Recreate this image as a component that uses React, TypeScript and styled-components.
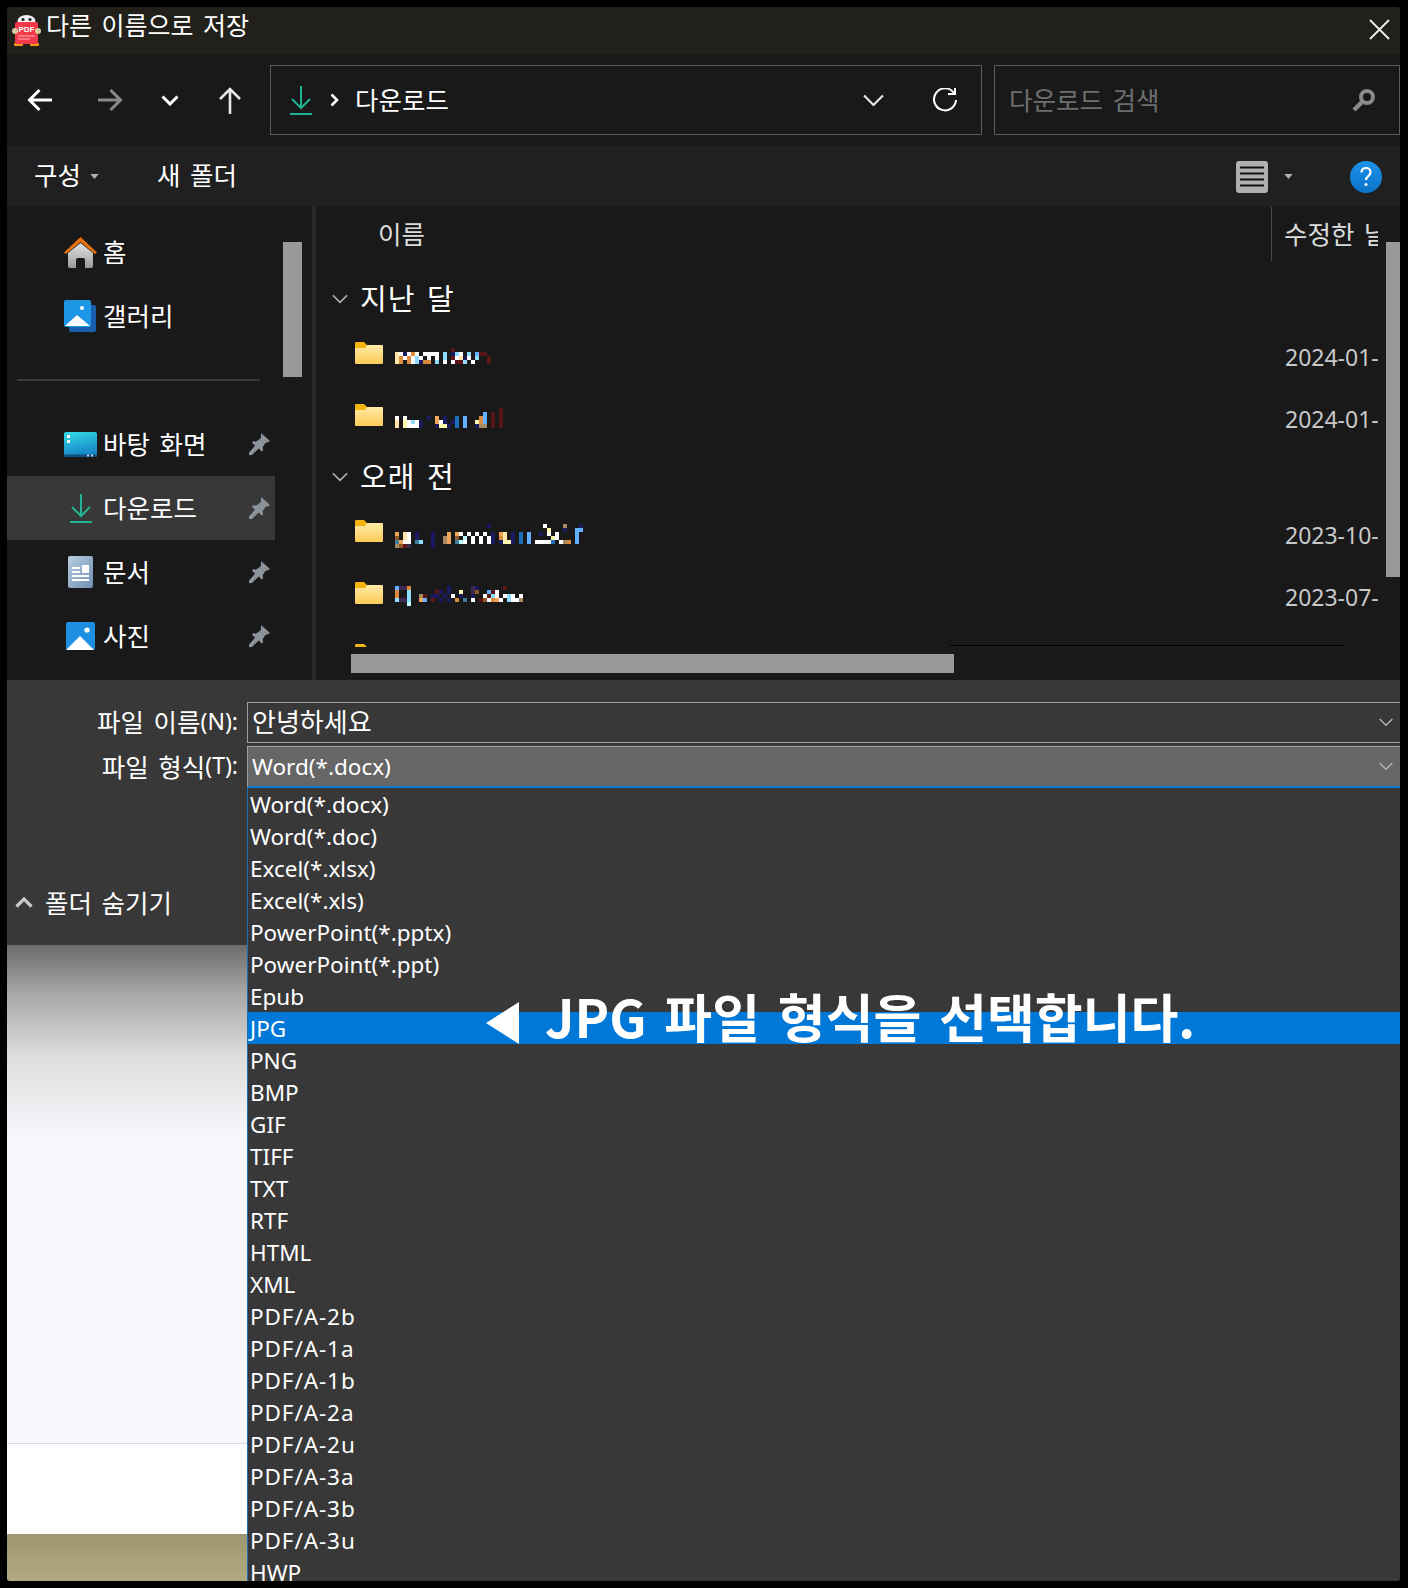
import React from "react";
import styled, { createGlobalStyle } from "styled-components";

const GlobalStyle = createGlobalStyle`
  html, body { margin: 0; padding: 0; background: #000; }
  body {
    font-family: "Noto Sans", "Noto Sans CJK KR", sans-serif;
    color: #fff;
    word-spacing: 3px;
  }
  * { box-sizing: border-box; }
`;

const Page = styled.div`
  width: 1408px;
  height: 1588px;
  padding: 7px 8px 7px 7px;
  background: #000;
`;

const Window = styled.div`
  width: 1393px;
  height: 1574px;
  display: flex;
  flex-direction: column;
  overflow: hidden;
  border-radius: 3px;
  background: #191919;
`;

const TitleBar = styled.div`
  height: 48px;
  flex: none;
  display: flex;
  align-items: center;
  padding: 0 10px 0 5px;
  gap: 5px;
  background: #22201b;
  font-size: 25px;
  line-height: 36px;
`;

const TitleText = styled.span`
  flex: 1;
  margin-top: -12px;
`;

const NavBar = styled.div`
  height: 91px;
  flex: none;
  display: flex;
  padding: 10px 0 0 3px;
  background: #191919;
`;

const NavButton = styled.div<{ $w: number }>`
  width: ${(p) => p.$w}px;
  height: 70px;
  flex: none;
  display: flex;
  align-items: center;
  justify-content: center;
`;

const AddressBox = styled.div`
  width: 712px;
  height: 70px;
  flex: none;
  display: flex;
  align-items: center;
  padding: 0 0 0 18px;
  border: 1.5px solid #5a5a5a;
  font-size: 25.5px;
`;

const Crumb = styled.span`
  flex: 1;
  margin-left: 16px;
  margin-top: -3px;
`;

const AddressChevron = styled.div`
  display: flex;
  margin-right: 24px;
`;

const SearchBox = styled.div`
  width: 406px;
  height: 70px;
  margin-left: 12px;
  flex: none;
  display: flex;
  align-items: center;
  justify-content: space-between;
  padding: 0 23px 0 14px;
  border: 1.5px solid #5a5a5a;
  font-size: 25.5px;
  color: #6f6f6f;
`;

const SearchHint = styled.span`
  margin-top: -4px;
`;

const Toolbar = styled.div`
  height: 61px;
  flex: none;
  display: flex;
  align-items: center;
  padding: 0 18px 0 27px;
  background: #202020;
  font-size: 25.5px;
`;

const ToolLabel = styled.span`
  margin-top: -6px;
`;

const ToolGap = styled.div<{ $w: number }>`
  width: ${(p) => p.$w}px;
  flex: none;
`;

const Spacer = styled.div`
  flex: 1;
`;

const Browser = styled.div`
  height: 473px;
  flex: none;
  display: flex;
  background: #191919;
`;

const Sidebar = styled.div`
  width: 305px;
  flex: none;
  display: flex;
  overflow: hidden;
`;

const SideList = styled.div`
  width: 268px;
  flex: none;
  padding-top: 13px;
`;

const SideItem = styled.div<{ $selected?: boolean }>`
  height: 64px;
  display: flex;
  align-items: center;
  padding: 0 5px 0 57px;
  background: ${(p) => (p.$selected ? "#383838" : "transparent")};
  font-size: 25.5px;
`;

const SideIcon = styled.div`
  width: 33px;
  height: 33px;
  flex: none;
  display: flex;
  align-items: center;
  justify-content: center;
`;

const SideLabel = styled.span`
  flex: 1;
  margin: -4px 0 0 6px;
`;

const SideSeparator = styled.div`
  height: 2px;
  width: 243px;
  margin: 31px 0 31px 10px;
  background: #3a3a3a;
`;

const SideThumb = styled.div`
  width: 19px;
  height: 135px;
  flex: none;
  margin: 35px 0 0 8px;
  background: #999;
`;

const PaneDivider = styled.div`
  width: 4px;
  flex: none;
  background: #2a2a2a;
`;

const FilesPane = styled.div`
  flex: 1;
  min-width: 0;
  display: flex;
`;

const FilesMain = styled.div`
  width: 1062px;
  flex: none;
  display: flex;
  flex-direction: column;
  overflow: hidden;
`;

const ColumnHeader = styled.div`
  height: 54px;
  flex: none;
  display: grid;
  grid-template-columns: 955px 1fr;
  align-items: stretch;
  font-size: 25.5px;
  color: #dcdcdc;
`;

const ColumnName = styled.div`
  display: flex;
  align-items: center;
  padding: 0 0 3px 62px;
`;

const ColumnDate = styled.div`
  display: flex;
  align-items: center;
  padding: 0 0 3px 12px;
  border-left: 1.5px solid #4a4a4a;
  white-space: nowrap;
  overflow: hidden;
`;

const FileList = styled.div`
  height: 386px;
  flex: none;
  padding-top: 12px;
  overflow: hidden;
  position: relative;
`;

const GroupRow = styled.div`
  height: 54px;
  display: flex;
  align-items: flex-start;
  padding: 4px 0 0 16px;
  font-size: 29px;
  line-height: 40px;
`;

const GroupLabel = styled.span`
  margin: 2px 0 0 12px;
  letter-spacing: 1px;
`;

const GroupChevron = styled.div`
  display: flex;
  margin-top: 17px;
`;

const FileRow = styled.div`
  height: 62px;
  display: grid;
  grid-template-columns: 969px 1fr;
  align-items: center;
`;

const FileName = styled.div`
  display: flex;
  align-items: flex-start;
  gap: 12px;
  height: 100%;
  padding: 15px 0 0 39px;
`;

const FileDate = styled.div`
  font-size: 23px;
  color: #c8c8c8;
  white-space: nowrap;
  overflow: hidden;
  margin-top: -2px;
`;

const HScrollTrack = styled.div`
  height: 33px;
  flex: none;
  padding: 7px 0 0 35px;
`;

const HScrollThumb = styled.div`
  width: 603px;
  height: 19px;
  background: #999;
`;

const ClipLine = styled.div`
  position: absolute;
  left: 634px;
  bottom: 1px;
  width: 394px;
  height: 1px;
  background: #000;
`;

const VScroll = styled.div`
  flex: 1;
  padding: 35px 0 0 8px;
`;

const VThumb = styled.div`
  width: 14px;
  height: 335px;
  background: #999;
`;

const Lower = styled.div`
  flex: 1;
  min-height: 0;
  display: flex;
  background: #383838;
`;

const LowerLeft = styled.div`
  width: 240px;
  flex: none;
  display: flex;
  flex-direction: column;
`;

const FormPanel = styled.div`
  height: 265px;
  flex: none;
  padding-top: 20px;
  display: flex;
  flex-direction: column;
  background: #383838;
`;

const FieldLabel = styled.div<{ $h: number }>`
  height: ${(p) => p.$h}px;
  flex: none;
  display: flex;
  align-items: center;
  justify-content: flex-end;
  padding-right: 9px;
  font-size: 25.5px;
`;

const Mnemonic = styled.span`
  font-size: 23px;
  word-spacing: 0;
`;

const HideFolders = styled.div`
  margin-top: auto;
  height: 82px;
  display: flex;
  align-items: flex-start;
  gap: 12px;
  padding: 22px 0 0 8px;
  font-size: 25.5px;
  line-height: 36px;
`;

const HideChevron = styled.div`
  display: flex;
  margin-top: 12px;
`;

const BackdropFade = styled.div`
  height: 499px;
  flex: none;
  border-bottom: 1px solid #d6d6ea;
  background: linear-gradient(
    to bottom,
    #6c6c6c 0,
    #a9a9a9 50px,
    #dcdcdc 110px,
    #f6f7fb 190px,
    #f8f9fd 100%
  );
`;

const BackdropWhite = styled.div`
  height: 90px;
  flex: none;
  background: #fff;
`;

const BackdropSand = styled.div`
  flex: 1;
  background: linear-gradient(to bottom, #9e9672, #b2aa7f);
`;

const LowerRight = styled.div`
  flex: 1;
  min-width: 0;
  padding-top: 22px;
  display: flex;
  flex-direction: column;
`;

const FieldBox = styled.div<{ $active?: boolean }>`
  height: ${(p) => (p.$active ? 42 : 41)}px;
  margin-bottom: ${(p) => (p.$active ? 0 : 3)}px;
  flex: none;
  display: flex;
  align-items: center;
  justify-content: space-between;
  padding: 0 7px 0 4px;
  background: ${(p) => (p.$active ? "#666" : "#383838")};
  border: 1.5px solid #a0a0a0;
  border-right: none;
  border-bottom: ${(p) => (p.$active ? "2px solid #0f78d4" : "1.5px solid #a0a0a0")};
  font-size: ${(p) => (p.$active ? 22.5 : 26)}px;
`;

const FieldValue = styled.span<{ $active?: boolean }>`
  margin-top: ${(p) => (p.$active ? 0 : -4)}px;
`;

const Dropdown = styled.div`
  flex: 1;
  min-height: 0;
  overflow: hidden;
  background: #383838;
  border-left: 1.5px solid #1f6fb0;
`;

const Option = styled.div<{ $selected?: boolean; $spaced?: boolean }>`
  height: 32px;
  position: relative;
  padding-left: 2px;
  line-height: 34px;
  font-size: 22.5px;
  letter-spacing: ${(p) => (p.$spaced ? 0.9 : 0)}px;
  white-space: nowrap;
  background: ${(p) => (p.$selected ? "#0078d7" : "transparent")};
`;

const Callout = styled.div`
  position: absolute;
  left: 238px;
  top: -10px;
  height: 42px;
  display: flex;
  align-items: flex-end;
  gap: 26px;
  font-size: 52px;
  font-weight: 700;
  line-height: 42px;
  letter-spacing: 0;
  word-spacing: 6px;
  color: #fff;
  font-family: "Noto Sans CJK KR", "Noto Sans", sans-serif;
`;

const CalloutArrow = styled.div`
  width: 33px;
  height: 42px;
  flex: none;
  background: #fff;
  clip-path: polygon(100% 0, 100% 100%, 0 50%);
`;

const CalloutText = styled.span`
  display: block;
  margin-bottom: 7px;
  white-space: nowrap;
`;

const palette: Record<string, string> = {
  w: "#ffffff",
  c: "#ffe6a8",
  y: "#fff9b0",
  o: "#d98c3e",
  p: "#f2a65a",
  n: "#1a1a60",
  b: "#1f6fb8",
  l: "#62b0ff",
  s: "#8fdcff",
  a: "#bffcff",
  r: "#5a1616",
  d: "#3c2a50",
  t: "#3f7f9e",
  k: "#a88a62",
  e: "#8f5a2a",
};

// the file names are mosaicked in the picture, one letter = one 4px block
const Mosaic = ({ rows, top = 0 }: { rows: string[]; top?: number }) => {
  const width = Math.max(...rows.map((r) => r.length)) * 4;
  return (
    <svg width={width} height={rows.length * 4} style={{ marginTop: top, flex: "none" }}>
      {rows.map((row, y) =>
        row.split("").map((ch, x) =>
          palette[ch] ? (
            <rect key={`${x}-${y}`} x={x * 4} y={y * 4} width={4} height={4} fill={palette[ch]} />
          ) : null
        )
      )}
    </svg>
  );
};

const BackArrow = () => (
  <svg width="26" height="24" viewBox="0 0 26 24" fill="none" stroke="#fff" strokeWidth="3">
    <path d="M25 12H3M12.500 2 2.500 12l10 10" />
  </svg>
);

const ForwardArrow = () => (
  <svg width="26" height="24" viewBox="0 0 26 24" fill="none" stroke="#8a8a8a" strokeWidth="3">
    <path d="M1 12h22M13.500 2l10 10-10 10" />
  </svg>
);

const UpArrow = () => (
  <svg width="24" height="27" viewBox="0 0 24 27" fill="none" stroke="#e8e8e8" strokeWidth="2.6">
    <path d="M12 27V3M2 12 12 2l10 10" />
  </svg>
);

const SmallChevron = () => (
  <svg width="18" height="11" viewBox="0 0 18 11" fill="none" stroke="#fff" strokeWidth="3">
    <path d="M1.500 1.500 9 9l7.500-7.500" />
  </svg>
);

const ThinChevron = ({ w = 14, color = "#b5b5b5" }: { w?: number; color?: string }) => (
  <svg width={w} height={w * 0.6} viewBox="0 0 20 12" fill="none" stroke={color} strokeWidth="2">
    <path d="M1 1.500 10 10.500 19 1.500" />
  </svg>
);

const DownloadIcon = () => (
  <svg width="24" height="29" viewBox="0 0 24 29" fill="none" stroke="#1fb394" strokeWidth="2">
    <path d="M12 0v21M3 13l9 9 9-9" />
    <path d="M1 28h22" />
  </svg>
);

const Caret = () => (
  <svg width="9" height="5" viewBox="0 0 10 6">
    <path d="M0 0h10L5 6z" fill="#b0b0b0" />
  </svg>
);

const HomeIcon = () => (
  <svg width="33" height="31" viewBox="0 0 33 31">
    <defs>
      <linearGradient id="homeBody" x1="0" y1="0" x2="0" y2="1">
        <stop offset="0" stopColor="#e4e4e4" />
        <stop offset="1" stopColor="#9a9a9a" />
      </linearGradient>
    </defs>
    <path d="M16.500 6 29 16v13a2 2 0 0 1-2 2h-6v-8a2 2 0 0 0-2-2h-5a2 2 0 0 0-2 2v8H6a2 2 0 0 1-2-2V16z" fill="url(#homeBody)" />
    <path d="M16.500 0 33 15.500 31 17 16.500 5 2 17 0 15.500z" fill="#e8700c" />
  </svg>
);

const GalleryIcon = () => (
  <svg width="33" height="33" viewBox="0 0 33 33">
    <rect x="5" y="5" width="27" height="27" rx="2" fill="#1a5fae" />
    <rect x="0" y="0" width="27" height="27" rx="2" fill="#1e96e6" />
    <path d="M1 26 13 15l13 11z" fill="#fff" />
    <circle cx="18" cy="8" r="2" fill="#fff" />
  </svg>
);

const DesktopIcon = () => (
  <svg width="33" height="25" viewBox="0 0 33 25">
    <defs>
      <linearGradient id="deskFill" x1="0" y1="0" x2="0.3" y2="1">
        <stop offset="0" stopColor="#36dce8" />
        <stop offset="1" stopColor="#1684c6" />
      </linearGradient>
    </defs>
    <rect width="33" height="25" rx="2" fill="url(#deskFill)" />
    <rect y="22.500" width="33" height="2.500" fill="#0e4f80" />
    <rect x="3" y="3" width="3" height="3" fill="#fff" />
    <rect x="3" y="8" width="3" height="3" fill="#fff" />
    <rect x="23" y="22.500" width="2" height="2" fill="#ccd" />
    <rect x="27" y="22.500" width="2" height="2" fill="#ccd" />
  </svg>
);

const DocIcon = () => (
  <svg width="25" height="32" viewBox="0 0 25 32">
    <defs>
      <linearGradient id="docFill" x1="0" y1="0" x2="1" y2="1">
        <stop offset="0" stopColor="#b8cde0" />
        <stop offset="1" stopColor="#6f8fb4" />
      </linearGradient>
    </defs>
    <rect width="25" height="32" rx="2" fill="url(#docFill)" />
    <path d="M4 11h8v2H4zM4 15h8v2H4zM4 19h17v2H4zM4 23h17v2H4z" fill="#fff" />
    <rect x="14" y="9" width="7" height="8" fill="#fff" />
  </svg>
);

const PhotoIcon = () => (
  <svg width="29" height="28" viewBox="0 0 29 28">
    <rect width="29" height="28" rx="2" fill="#1e8fe0" />
    <path d="M0 28 14 14l14 14z" fill="#fff" />
    <circle cx="21" cy="8" r="2.600" fill="#fff" />
  </svg>
);

const PinIcon = () => (
  <svg width="22" height="22" viewBox="0 0 22 22">
    <path d="M13 0 22 8l-2.500 1.500-2 .2-2.800 4.600.4 3.200-1.400 1-3-3L4 22H1v-2.500l6-6.700-3-3 1-1.600 3.200.2 4.400-3L13 3z" fill="#8b939a" />
  </svg>
);

const FolderIcon = () => (
  <svg width="28" height="22" viewBox="0 0 28 22">
    <defs>
      <linearGradient id="folderFill" x1="0" y1="0" x2="0" y2="1">
        <stop offset="0" stopColor="#ffeaa6" />
        <stop offset="1" stopColor="#fdcb58" />
      </linearGradient>
    </defs>
    <rect y="3" width="28" height="19" rx="1" fill="url(#folderFill)" />
    <path d="M0 1a1 1 0 0 1 1-1h8l3 3-2 3H0z" fill="#f5b50f" />
  </svg>
);

const RefreshIcon = () => (
  <svg width="24" height="24" viewBox="0 0 24 24" fill="none" stroke="#fff" strokeWidth="2">
    <path d="M21 5A11 11 0 1 0 23 12" />
    <path d="M22 0v6h-7" />
  </svg>
);

const SearchIcon = () => (
  <svg width="24" height="24" viewBox="0 0 24 24" fill="none" stroke="#8a8a8a">
    <circle cx="15" cy="9" r="6" strokeWidth="4" />
    <path d="M10 14 2 22" strokeWidth="4.500" />
  </svg>
);

const ListViewIcon = () => (
  <svg width="32" height="32" viewBox="0 0 32 32">
    <rect width="32" height="32" rx="3" fill="#b0b0b0" />
    <path d="M4 6.500h24M4 12.500h24M4 18.500h24M4 24.500h24" stroke="#111" strokeWidth="2" />
  </svg>
);

const HelpIcon = () => (
  <svg width="32" height="32" viewBox="0 0 32 32">
    <defs>
      <linearGradient id="helpFill" x1="0" y1="0" x2="0" y2="1">
        <stop offset="0" stopColor="#1c93ea" />
        <stop offset="1" stopColor="#0a72c8" />
      </linearGradient>
    </defs>
    <circle cx="16" cy="16" r="16" fill="url(#helpFill)" />
    <path d="M11.500 11.500C11.500 8.500 13.500 7 16 7s4.500 1.600 4.500 4.200c0 3.800-4.500 3.800-4.500 7.800" fill="none" stroke="#fff" strokeWidth="2.200" />
    <circle cx="16" cy="23.500" r="1.600" fill="#fff" />
  </svg>
);

const CloseIcon = () => (
  <svg width="21" height="21" viewBox="0 0 21 21" stroke="#f0f0f0" strokeWidth="1.800" style={{ marginTop: -4 }}>
    <path d="M1 1l19 19M20 1 1 20" />
  </svg>
);

const AppIcon = () => (
  <svg width="29" height="32" viewBox="0 0 29 32">
    <ellipse cx="14.500" cy="6" rx="9" ry="6" fill="#f2f2f2" />
    <circle cx="11" cy="4.500" r="1.600" fill="#222" />
    <circle cx="18" cy="4.500" r="1.600" fill="#222" />
    <rect x="2" y="28" width="9" height="3" rx="1" fill="#f59a14" />
    <rect x="18" y="28" width="9" height="3" rx="1" fill="#f59a14" />
    <rect x="3" y="7" width="23" height="22" rx="2" fill="#f23a4a" />
    <circle cx="3" cy="16" r="3" fill="#d9c9a0" />
    <circle cx="26" cy="16" r="3" fill="#d9c9a0" />
    <text x="14.500" y="17" textAnchor="middle" fontSize="8" fontWeight="700" fill="#fff" fontFamily="Liberation Sans">PDF</text>
    <path d="M6 21h17M6 24h12" stroke="#ffb0b8" strokeWidth="1" />
  </svg>
);

const folders = {
  first: [
    "..............r.........",
    "cwnwow.wwww.s.nsw.s.lrr.",
    "cowowsw.w.w.s.rwcnw.s..r",
    "co.owsnoo.s.w.wrrs.w...r",
  ],
  second: [
    "..........................r",
    "......................l.r.r",
    "w.w.....n.p.n..b.l...ol.r.r",
    "c.ywswn...pwn.nb.l..yol.r.r",
    "c.ywwwn...nyyn.b.l..nkk.r.r",
  ],
  third: [
    ".......................n.............w....k...n",
    "......................................y...n..ll",
    "p.cw.n...n...p.pw.w.w.w.n.pc.n.b.l..n.w.w....l",
    "e.cw.n...n..kp.e.a.w.w.wn.oc.n.b.l.....yw....l",
    "tpww.ts..n..kp.taw.w.w.wn.nyyn.b.l.wwwwb.wko.l",
    "kerd.....n",
  ],
  fourth: [
    "lddo.........n.....dn......r.....",
    "o..s......rn.n..y..de..lrw.......",
    "o..s..kr.nn.n.w.n..n..wrsw.wsw.w.",
    "sdds..pl.r.n.n.o.t.w.rewopw.swwk.",
    "...a.............................",
  ],
};

const OPTIONS = [
  "Word(*.docx)",
  "Word(*.doc)",
  "Excel(*.xlsx)",
  "Excel(*.xls)",
  "PowerPoint(*.pptx)",
  "PowerPoint(*.ppt)",
  "Epub",
  "JPG",
  "PNG",
  "BMP",
  "GIF",
  "TIFF",
  "TXT",
  "RTF",
  "HTML",
  "XML",
  "PDF/A-2b",
  "PDF/A-1a",
  "PDF/A-1b",
  "PDF/A-2a",
  "PDF/A-2u",
  "PDF/A-3a",
  "PDF/A-3b",
  "PDF/A-3u",
  "HWP",
];

const SIDE_TOP = [
  { label: "홈", icon: <HomeIcon /> },
  { label: "갤러리", icon: <GalleryIcon /> },
];

const SIDE_PINNED = [
  { label: "바탕 화면", icon: <DesktopIcon /> },
  { label: "다운로드", icon: <DownloadIcon />, selected: true },
  { label: "문서", icon: <DocIcon /> },
  { label: "사진", icon: <PhotoIcon /> },
];

const File = ({ rows, date, top }: { rows: string[]; date: string; top: number }) => (
  <FileRow>
    <FileName>
      <FolderIcon />
      <Mosaic rows={rows} top={top} />
    </FileName>
    <FileDate>{date}</FileDate>
  </FileRow>
);

const Group = ({ label }: { label: string }) => (
  <GroupRow>
    <GroupChevron>
      <ThinChevron w={16} />
    </GroupChevron>
    <GroupLabel>{label}</GroupLabel>
  </GroupRow>
);

const App = () => (
  <Page>
    <GlobalStyle />
    <Window>
      <TitleBar>
        <AppIcon />
        <TitleText>다른 이름으로 저장</TitleText>
        <CloseIcon />
      </TitleBar>

      <NavBar>
        <NavButton $w={60}>
          <BackArrow />
        </NavButton>
        <NavButton $w={80}>
          <ForwardArrow />
        </NavButton>
        <NavButton $w={40}>
          <SmallChevron />
        </NavButton>
        <NavButton $w={80}>
          <UpArrow />
        </NavButton>
        <AddressBox>
          <DownloadIcon />
          <svg width="9" height="14" viewBox="0 0 9 14" fill="none" stroke="#fff" strokeWidth="2.600" style={{ marginLeft: 17 }}>
            <path d="M1.500 1.500 7 7l-5.500 5.500" />
          </svg>
          <Crumb>다운로드</Crumb>
          <AddressChevron>
            <ThinChevron w={21} color="#e8e8e8" />
          </AddressChevron>
          <NavButton $w={73}>
            <RefreshIcon />
          </NavButton>
        </AddressBox>
        <SearchBox>
          <SearchHint>다운로드 검색</SearchHint>
          <SearchIcon />
        </SearchBox>
      </NavBar>

      <Toolbar>
        <ToolLabel>구성</ToolLabel>
        <ToolGap $w={9} />
        <Caret />
        <ToolGap $w={58} />
        <ToolLabel>새 폴더</ToolLabel>
        <Spacer />
        <ListViewIcon />
        <ToolGap $w={16} />
        <Caret />
        <ToolGap $w={57} />
        <HelpIcon />
      </Toolbar>

      <Browser>
        <Sidebar>
          <SideList>
            {SIDE_TOP.map((item) => (
              <SideItem key={item.label}>
                <SideIcon>{item.icon}</SideIcon>
                <SideLabel>{item.label}</SideLabel>
              </SideItem>
            ))}
            <SideSeparator />
            {SIDE_PINNED.map((item) => (
              <SideItem key={item.label} $selected={item.selected}>
                <SideIcon>{item.icon}</SideIcon>
                <SideLabel>{item.label}</SideLabel>
                <PinIcon />
              </SideItem>
            ))}
          </SideList>
          <SideThumb />
        </Sidebar>
        <PaneDivider />
        <FilesPane>
          <FilesMain>
            <ColumnHeader>
              <ColumnName>이름</ColumnName>
              <ColumnDate>수정한 날짜</ColumnDate>
            </ColumnHeader>
            <FileList>
              <Group label="지난 달" />
              <File rows={folders.first} date="2024-01-" top={6} />
              <File rows={folders.second} date="2024-01-" top={4} />
              <Group label="오래 전" />
              <File rows={folders.third} date="2023-10-" top={4} />
              <File rows={folders.fourth} date="2023-07-" top={4} />
              <FileRow>
                <FileName>
                  <FolderIcon />
                </FileName>
              </FileRow>
              <ClipLine />
            </FileList>
            <HScrollTrack>
              <HScrollThumb />
            </HScrollTrack>
          </FilesMain>
          <VScroll>
            <VThumb />
          </VScroll>
        </FilesPane>
      </Browser>

      <Lower>
        <LowerLeft>
          <FormPanel>
            <FieldLabel $h={41}>
              파일 이름<Mnemonic>(N):</Mnemonic>
            </FieldLabel>
            <FieldLabel $h={48}>
              파일 형식<Mnemonic>(T):</Mnemonic>
            </FieldLabel>
            <HideFolders>
              <HideChevron>
                <svg width="18" height="11" viewBox="0 0 18 11" fill="none" stroke="#c8c8c8" strokeWidth="3.200">
                  <path d="M1.500 9.500 9 2l7.500 7.500" />
                </svg>
              </HideChevron>
              폴더 숨기기
            </HideFolders>
          </FormPanel>
          <BackdropFade />
          <BackdropWhite />
          <BackdropSand />
        </LowerLeft>
        <LowerRight>
          <FieldBox>
            <FieldValue>안녕하세요</FieldValue>
            <ThinChevron />
          </FieldBox>
          <FieldBox $active>
            <FieldValue $active>Word(*.docx)</FieldValue>
            <ThinChevron />
          </FieldBox>
          <Dropdown>
            {OPTIONS.map((opt) => (
              <Option key={opt} $selected={opt === "JPG"} $spaced={opt.startsWith("PDF")}>
                {opt}
                {opt === "JPG" && (
                  <Callout>
                    <CalloutArrow />
                    <CalloutText>JPG 파일 형식을 선택합니다.</CalloutText>
                  </Callout>
                )}
              </Option>
            ))}
          </Dropdown>
        </LowerRight>
      </Lower>
    </Window>
  </Page>
);

export default App;
